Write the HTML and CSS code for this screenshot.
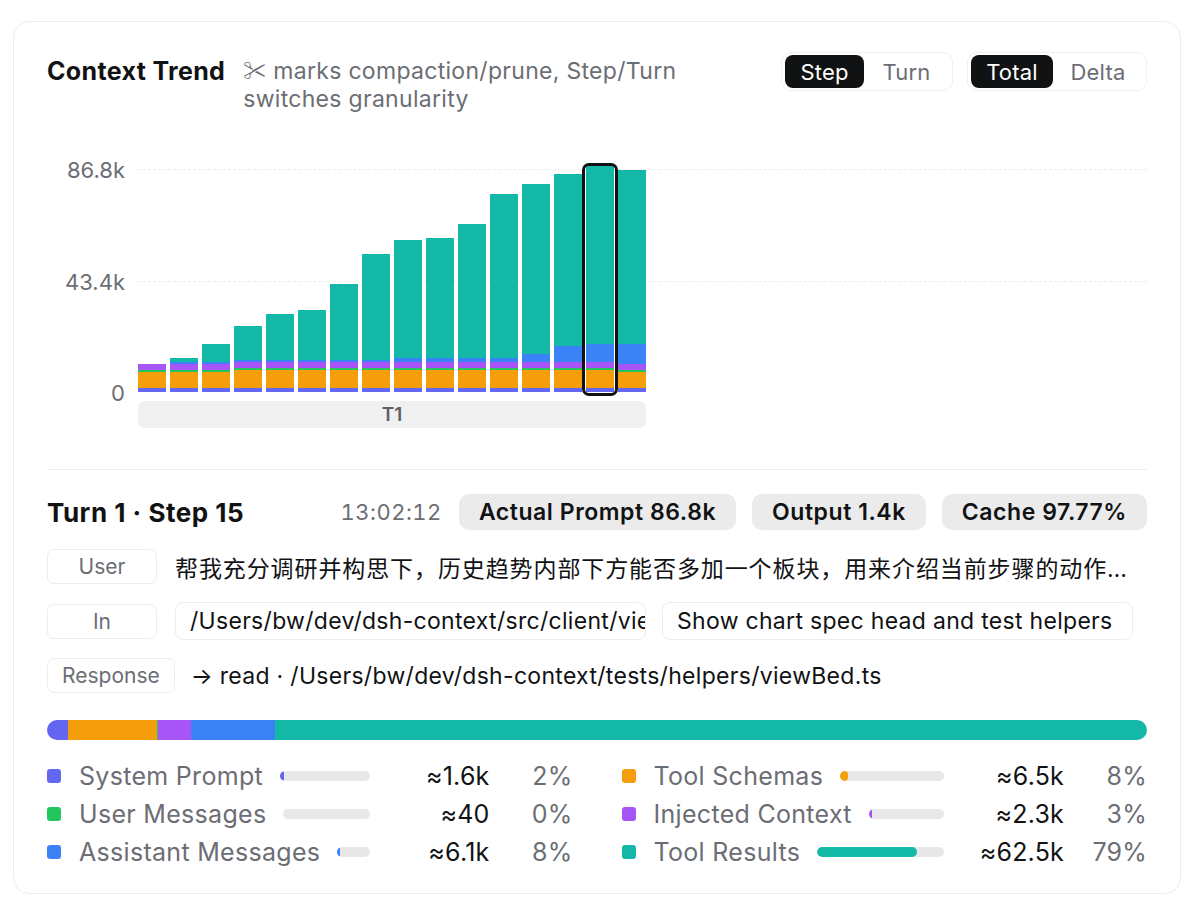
FILE: index.html
```html
<!DOCTYPE html>
<html lang="en">
<head>
<meta charset="utf-8">
<title>Context Trend</title>
<link rel="stylesheet" href="styles.css">
</head>
<body>
<div class="card">
  <div class="header">
    <div class="title-block">
      <h1 class="title">Context Trend</h1>
      <p class="subtitle">✂ marks compaction/prune, Step/Turn switches granularity</p>
    </div>
    <div class="toggles">
      <div class="seg">
        <span class="seg-btn active w-step">Step</span>
        <span class="seg-btn w-turn">Turn</span>
      </div>
      <div class="seg">
        <span class="seg-btn active w-total">Total</span>
        <span class="seg-btn w-delta">Delta</span>
      </div>
    </div>
  </div>

  <div class="chart">
    <div class="yaxis">
      <span class="ylabel y1">86.8k</span>
      <span class="ylabel y2">43.4k</span>
      <span class="ylabel y3">0</span>
    </div>
    <div class="plot">
      <div class="grid g1"></div>
      <div class="grid g2"></div>
      <div class="bars">
        <div class="bar"><i class="s-sys" style="height:4px"></i><i class="s-sch" style="height:16px"></i><i class="s-usr" style="height:2px"></i><i class="s-inj" style="height:6px"></i></div>
        <div class="bar"><i class="s-sys" style="height:4px"></i><i class="s-sch" style="height:16px"></i><i class="s-usr" style="height:2px"></i><i class="s-inj" style="height:6px"></i><i class="s-ast" style="height:2px"></i><i class="s-res" style="height:4px"></i></div>
        <div class="bar"><i class="s-sys" style="height:4px"></i><i class="s-sch" style="height:16px"></i><i class="s-usr" style="height:2px"></i><i class="s-inj" style="height:6px"></i><i class="s-ast" style="height:2px"></i><i class="s-res" style="height:18px"></i></div>
        <div class="bar"><i class="s-sys" style="height:4px"></i><i class="s-sch" style="height:18px"></i><i class="s-usr" style="height:2px"></i><i class="s-inj" style="height:6px"></i><i class="s-ast" style="height:2px"></i><i class="s-res" style="height:34px"></i></div>
        <div class="bar"><i class="s-sys" style="height:4px"></i><i class="s-sch" style="height:18px"></i><i class="s-usr" style="height:2px"></i><i class="s-inj" style="height:6px"></i><i class="s-ast" style="height:2px"></i><i class="s-res" style="height:46px"></i></div>
        <div class="bar"><i class="s-sys" style="height:4px"></i><i class="s-sch" style="height:18px"></i><i class="s-usr" style="height:2px"></i><i class="s-inj" style="height:6px"></i><i class="s-ast" style="height:2px"></i><i class="s-res" style="height:50px"></i></div>
        <div class="bar"><i class="s-sys" style="height:4px"></i><i class="s-sch" style="height:18px"></i><i class="s-usr" style="height:2px"></i><i class="s-inj" style="height:6px"></i><i class="s-ast" style="height:2px"></i><i class="s-res" style="height:76px"></i></div>
        <div class="bar"><i class="s-sys" style="height:4px"></i><i class="s-sch" style="height:18px"></i><i class="s-usr" style="height:2px"></i><i class="s-inj" style="height:6px"></i><i class="s-ast" style="height:2px"></i><i class="s-res" style="height:106px"></i></div>
        <div class="bar"><i class="s-sys" style="height:4px"></i><i class="s-sch" style="height:18px"></i><i class="s-usr" style="height:2px"></i><i class="s-inj" style="height:6px"></i><i class="s-ast" style="height:4px"></i><i class="s-res" style="height:118px"></i></div>
        <div class="bar"><i class="s-sys" style="height:4px"></i><i class="s-sch" style="height:18px"></i><i class="s-usr" style="height:2px"></i><i class="s-inj" style="height:6px"></i><i class="s-ast" style="height:4px"></i><i class="s-res" style="height:120px"></i></div>
        <div class="bar"><i class="s-sys" style="height:4px"></i><i class="s-sch" style="height:18px"></i><i class="s-usr" style="height:2px"></i><i class="s-inj" style="height:6px"></i><i class="s-ast" style="height:4px"></i><i class="s-res" style="height:134px"></i></div>
        <div class="bar"><i class="s-sys" style="height:4px"></i><i class="s-sch" style="height:18px"></i><i class="s-usr" style="height:2px"></i><i class="s-inj" style="height:6px"></i><i class="s-ast" style="height:4px"></i><i class="s-res" style="height:164px"></i></div>
        <div class="bar"><i class="s-sys" style="height:4px"></i><i class="s-sch" style="height:18px"></i><i class="s-usr" style="height:2px"></i><i class="s-inj" style="height:6px"></i><i class="s-ast" style="height:8px"></i><i class="s-res" style="height:170px"></i></div>
        <div class="bar"><i class="s-sys" style="height:4px"></i><i class="s-sch" style="height:18px"></i><i class="s-usr" style="height:2px"></i><i class="s-inj" style="height:6px"></i><i class="s-ast" style="height:16px"></i><i class="s-res" style="height:172px"></i></div>
        <div class="bar sel"><i class="s-sys" style="height:4px"></i><i class="s-sch" style="height:18px"></i><i class="s-usr" style="height:2px"></i><i class="s-inj" style="height:6px"></i><i class="s-ast" style="height:18px"></i><i class="s-res" style="height:178px"></i></div>
        <div class="bar"><i class="s-sys" style="height:4px"></i><i class="s-sch" style="height:16px"></i><i class="s-usr" style="height:2px"></i><i class="s-inj" style="height:6px"></i><i class="s-ast" style="height:20px"></i><i class="s-res" style="height:174px"></i></div>
      </div>
    </div>
  </div>
  <div class="xaxis"><span class="turn-pill">T1</span></div>

  <div class="divider"></div>

  <div class="step-row">
    <h2 class="step-title">Turn 1 · Step 15</h2>
    <div class="step-meta">
      <span class="time">13:02:12</span>
      <span class="pill">Actual Prompt 86.8k</span>
      <span class="pill">Output 1.4k</span>
      <span class="pill">Cache 97.77%</span>
    </div>
  </div>

  <div class="info-row r-user">
    <span class="tag">User</span>
    <span class="info-text cjk">帮我充分调研并构思下，历史趋势内部下方能否多加一个板块，用来介绍当前步骤的动作以及对应的上下文变化情况，让用户更容易理解</span>
  </div>
  <div class="info-row r-in">
    <span class="tag">In</span>
    <div class="in-boxes">
      <span class="box">/Users/bw/dev/dsh-context/src/client/views/chart.spec.ts</span>
      <span class="box">Show chart spec head and test helpers</span>
    </div>
  </div>
  <div class="info-row r-resp">
    <span class="tag">Response</span>
    <span class="info-text">→ read · /Users/bw/dev/dsh-context/tests/helpers/viewBed.ts</span>
  </div>

  <div class="stack">
    <i class="s-sys" style="width:21px"></i><i class="s-sch" style="width:89px"></i><i class="s-usr" style="width:1px"></i><i class="s-inj" style="width:33px"></i><i class="s-ast" style="width:84px"></i><i class="s-res grow"></i>
  </div>

  <div class="legend">
    <div class="lg-row">
      <span class="sw s-sys"></span><span class="lg-name">System Prompt</span>
      <span class="mini"><b class="s-sys" style="width:4px"></b></span>
      <span class="lg-val">≈1.6k</span><span class="lg-pct">2%</span>
    </div>
    <div class="lg-row">
      <span class="sw s-sch"></span><span class="lg-name">Tool Schemas</span>
      <span class="mini"><b class="s-sch" style="width:8px"></b></span>
      <span class="lg-val">≈6.5k</span><span class="lg-pct">8%</span>
    </div>
    <div class="lg-row">
      <span class="sw s-usr"></span><span class="lg-name">User Messages</span>
      <span class="mini"></span>
      <span class="lg-val">≈40</span><span class="lg-pct">0%</span>
    </div>
    <div class="lg-row">
      <span class="sw s-inj"></span><span class="lg-name">Injected Context</span>
      <span class="mini"><b class="s-inj" style="width:3px"></b></span>
      <span class="lg-val">≈2.3k</span><span class="lg-pct">3%</span>
    </div>
    <div class="lg-row">
      <span class="sw s-ast"></span><span class="lg-name">Assistant Messages</span>
      <span class="mini"><b class="s-ast" style="width:3px"></b></span>
      <span class="lg-val">≈6.1k</span><span class="lg-pct">8%</span>
    </div>
    <div class="lg-row">
      <span class="sw s-res"></span><span class="lg-name">Tool Results</span>
      <span class="mini"><b class="s-res" style="width:79%"></b></span>
      <span class="lg-val">≈62.5k</span><span class="lg-pct">79%</span>
    </div>
  </div>
</div>
</body>
</html>
```

FILE: styles.css
```css
* { box-sizing: border-box; }
html, body { margin: 0; padding: 0; background: #ffffff; }
body {
  font-family: Inter, "Noto Sans", "Noto Sans CJK SC", sans-serif;
  color: #111214;
}

.card {
  margin: 21px 13px 14px 13px;
  width: 1168px;
  border: 1px solid #ededed;
  border-radius: 16px;
  padding: 30px 33px 22px 33px;
  background: #fff;
}

/* colors */
.s-sys { background: #6366f1; }
.s-sch { background: #f59e0b; }
.s-usr { background: #22c55e; }
.s-inj { background: #a855f7; }
.s-ast { background: #3b82f6; }
.s-res { background: #14b8a6; }

/* header */
.header {
  display: flex;
  justify-content: space-between;
  align-items: flex-start;
  height: 61px;
}
.title-block {
  display: flex;
  align-items: flex-start;
  gap: 18px;
  padding-top: 5px;
}
.title {
  margin: 0;
  font-size: 25px;
  font-weight: 700;
  line-height: 28px;
  letter-spacing: 0.35px;
  white-space: nowrap;
}
.subtitle {
  margin: 0;
  font-size: 23px;
  line-height: 28px;
  letter-spacing: 0.3px;
  color: #6b6e74;
  width: 455px;
}
.toggles { display: flex; gap: 14px; }
.seg {
  display: flex;
  border: 1px solid #f0f0f0;
  border-radius: 10px;
  padding: 2px 3px;
  height: 39px;
}
.seg-btn {
  display: flex;
  align-items: center;
  justify-content: center;
  height: 33px;
  border-radius: 8px;
  font-size: 22px;
  letter-spacing: 0.2px;
  color: #6b6e74;
}
.seg-btn.active { background: #111214; color: #fff; }
.w-step { width: 79px; }
.w-turn { width: 85px; }
.w-total { width: 82px; }
.w-delta { width: 90px; }

/* chart */
.chart {
  display: flex;
  margin-top: 37px;
  height: 242px;
}
.yaxis {
  position: relative;
  width: 91px;
  flex: none;
}
.ylabel {
  position: absolute;
  right: 13px;
  transform: translateY(-50%);
  font-size: 22px;
  color: #6b6e74;
  line-height: 1;
}
.y1 { top: 20px; }
.y2 { top: 132px; }
.y3 { top: 243px; }
.plot {
  position: relative;
  flex: 1;
}
.grid {
  position: absolute;
  left: 0;
  right: 0;
  border-top: 1px dashed #ececec;
}
.g1 { top: 19px; }
.g2 { top: 131px; }
.bars {
  position: relative;
  display: flex;
  align-items: flex-end;
  gap: 4px;
  height: 100%;
}
.bar {
  position: relative;
  width: 28px;
  display: flex;
  flex-direction: column-reverse;
}
.bar i { display: block; width: 100%; }
.bar.sel::after {
  content: "";
  position: absolute;
  top: -3px;
  bottom: -4px;
  left: -4px;
  right: -4px;
  border: 3px solid #111214;
  border-radius: 7px;
}
.xaxis {
  margin-top: 9px;
  padding-left: 91px;
}
.turn-pill {
  display: flex;
  align-items: center;
  justify-content: center;
  width: 508px;
  height: 27px;
  background: #f0f0f0;
  border-radius: 6px;
  font-size: 19px;
  font-weight: 600;
  color: #5e6066;
}

.divider {
  margin-top: 41px;
  border-top: 1px solid #ededed;
}

/* step row */
.step-row {
  display: flex;
  justify-content: space-between;
  align-items: center;
  margin-top: 24px;
  height: 36px;
}
.step-title {
  margin: 0;
  font-size: 26px;
  font-weight: 700;
  letter-spacing: 0.5px;
}
.step-meta {
  display: flex;
  align-items: center;
  gap: 16px;
}
.time {
  font-size: 22px;
  font-variant-numeric: tabular-nums;
  letter-spacing: 0.5px;
  color: #6b6e74;
  margin-right: 1px;
}
.pill {
  display: flex;
  align-items: center;
  height: 36px;
  padding: 0 20px;
  background: #ebebeb;
  border-radius: 10px;
  font-size: 23px;
  font-weight: 600;
  letter-spacing: 0.55px;
}

/* info rows */
.info-row {
  display: flex;
  align-items: center;
  gap: 18px;
}
.r-user { margin-top: 19px; height: 35px; }
.r-in { margin-top: 18px; height: 38px; }
.r-resp { margin-top: 18px; height: 35px; gap: 16px; }
.tag {
  flex: none;
  display: flex;
  align-items: center;
  justify-content: center;
  min-width: 110px;
  height: 35px;
  padding: 0 14px;
  border: 1px solid #ededed;
  border-radius: 7px;
  font-size: 21px;
  color: #6b6e74;
}
.info-text {
  flex: 1;
  min-width: 0;
  white-space: nowrap;
  overflow: hidden;
  text-overflow: ellipsis;
  font-size: 23px;
  letter-spacing: 0.3px;
  color: #111214;
}
.info-text.cjk { letter-spacing: 0.9px; }
.in-boxes {
  display: grid;
  grid-template-columns: 471px 471px;
  gap: 16px;
}
.box {
  display: flex;
  align-items: center;
  height: 38px;
  padding: 0 14px;
  border: 1px solid #ededed;
  border-radius: 8px;
  font-size: 23px;
  letter-spacing: 0.3px;
  white-space: nowrap;
  overflow: hidden;
}

/* stacked bar */
.stack {
  display: flex;
  margin-top: 27px;
  height: 20px;
  border-radius: 10px;
  overflow: hidden;
}
.stack i { display: block; height: 100%; flex: none; }
.stack i.grow { flex: 1; }

/* legend */
.legend {
  margin-top: 17px;
  display: grid;
  grid-template-columns: 1fr 1fr;
  column-gap: 49px;
}
.lg-row {
  display: flex;
  align-items: center;
  height: 38px;
}
.sw {
  flex: none;
  width: 14px;
  height: 14px;
  border-radius: 3px;
  margin-right: 18px;
}
.lg-name {
  font-size: 25px;
  letter-spacing: 0.3px;
  color: #6b6e74;
  white-space: nowrap;
}
.mini {
  flex: 1;
  margin-left: 17px;
  height: 10px;
  border-radius: 5px;
  background: #e8e8e8;
  overflow: hidden;
  display: flex;
}
.mini b { display: block; height: 100%; border-radius: 5px; }
.lg-val {
  flex: none;
  width: 120px;
  text-align: right;
  font-size: 25px;
  letter-spacing: 0.2px;
  color: #111214;
}
.lg-pct {
  flex: none;
  width: 83px;
  text-align: right;
  font-size: 25px;
  letter-spacing: 0.2px;
  color: #6b6e74;
}
```
